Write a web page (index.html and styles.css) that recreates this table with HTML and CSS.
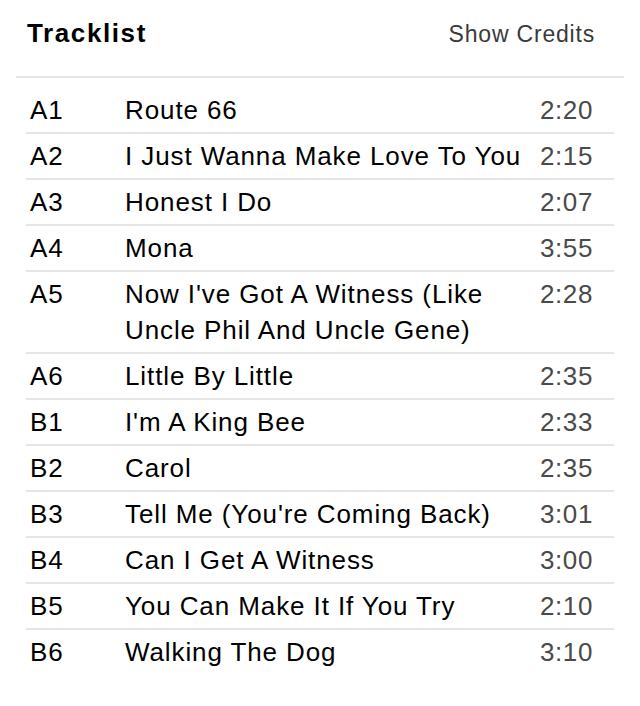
FILE: index.html
```html
<!DOCTYPE html>
<html lang="en">
<head>
<meta charset="utf-8">
<title>Tracklist</title>
<link rel="stylesheet" href="styles.css">
</head>
<body>
<section class="tracklist">
  <header class="tl-header">
    <h2 class="tl-title">Tracklist</h2>
    <a class="tl-credits" href="#">Show Credits</a>
  </header>
  <ol class="tl-list">
    <li class="track"><span class="pos">A1</span><span class="name">Route 66</span><span class="dur">2:20</span></li>
    <li class="track"><span class="pos">A2</span><span class="name">I Just Wanna Make Love To You</span><span class="dur">2:15</span></li>
    <li class="track"><span class="pos">A3</span><span class="name">Honest I Do</span><span class="dur">2:07</span></li>
    <li class="track"><span class="pos">A4</span><span class="name">Mona</span><span class="dur">3:55</span></li>
    <li class="track"><span class="pos">A5</span><span class="name">Now I've Got A Witness (Like Uncle Phil And Uncle Gene)</span><span class="dur">2:28</span></li>
    <li class="track"><span class="pos">A6</span><span class="name">Little By Little</span><span class="dur">2:35</span></li>
    <li class="track"><span class="pos">B1</span><span class="name">I'm A King Bee</span><span class="dur">2:33</span></li>
    <li class="track"><span class="pos">B2</span><span class="name">Carol</span><span class="dur">2:35</span></li>
    <li class="track"><span class="pos">B3</span><span class="name">Tell Me (You're Coming Back)</span><span class="dur">3:01</span></li>
    <li class="track"><span class="pos">B4</span><span class="name">Can I Get A Witness</span><span class="dur">3:00</span></li>
    <li class="track"><span class="pos">B5</span><span class="name">You Can Make It If You Try</span><span class="dur">2:10</span></li>
    <li class="track"><span class="pos">B6</span><span class="name">Walking The Dog</span><span class="dur">3:10</span></li>
  </ol>
</section>
</body>
</html>
```

FILE: styles.css
```css
html, body {
  margin: 0;
  padding: 0;
  background: #ffffff;
}

body {
  font-family: "Liberation Sans", Arial, Helvetica, sans-serif;
  color: #000;
}

.tracklist {
  width: 640px;
}

.tl-header {
  display: flex;
  justify-content: space-between;
  align-items: baseline;
  margin: 0 16px;
  padding: 18px 29px 27px 11px;
  border-bottom: 2px solid #e6e6e6;
}

.tl-title {
  margin: 0;
  font-size: 26px;
  line-height: 30px;
  font-weight: 700;
  letter-spacing: 1.6px;
  color: #000;
}

.tl-credits {
  font-size: 23px;
  line-height: 30px;
  letter-spacing: 0.8px;
  color: #3a3a3a;
  text-decoration: none;
}

.tl-list {
  list-style: none;
  margin: 0 26px;
  padding: 10px 0 0;
}

.track {
  display: grid;
  grid-template-columns: 95px 1fr auto;
  padding: 4px 21px 4px 4px;
  border-bottom: 2px solid #e6e6e6;
  font-size: 26px;
  line-height: 36px;
  letter-spacing: 0.9px;
}

.track:last-child {
  border-bottom: none;
}

.pos {
  color: #000;
}

.name {
  color: #000;
}

.dur {
  color: #4a4a4a;
  text-align: right;
  padding-left: 12px;
  letter-spacing: 0.6px;
}
```
